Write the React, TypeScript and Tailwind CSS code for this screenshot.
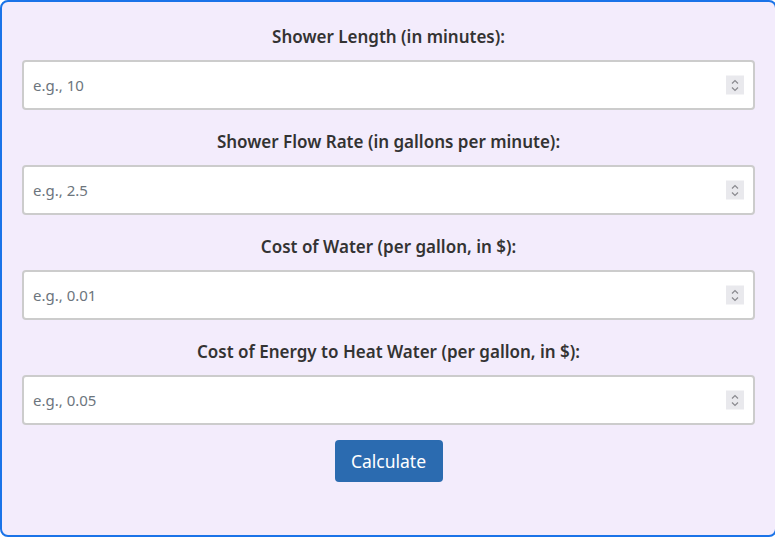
import React, { useState } from "react";

const fields = [
  { label: "Shower Length (in minutes):", placeholder: "e.g., 10" },
  { label: "Shower Flow Rate (in gallons per minute):", placeholder: "e.g., 2.5" },
  { label: "Cost of Water (per gallon, in $):", placeholder: "e.g., 0.01" },
  { label: "Cost of Energy to Heat Water (per gallon, in $):", placeholder: "e.g., 0.05" },
];

function Spinner() {
  return (
    <div className="pointer-events-none absolute right-[11px] top-1/2 flex h-[19px] w-[18px] -translate-y-1/2 items-center justify-center bg-[#e9e9ed]">
      <svg width="10" height="14" viewBox="0 0 10 14" fill="none" stroke="#8a8a8f" strokeWidth="1.2">
        <path d="M2 5 L5 2 L8 5" />
        <path d="M2 9 L5 12 L8 9" />
      </svg>
    </div>
  );
}

export default function App() {
  const [values, setValues] = useState<string[]>(["", "", "", ""]);

  return (
    <div className="h-[537px] w-[775px] overflow-hidden font-['Noto_Sans','Open_Sans',sans-serif]">
      <div className="flex h-[537px] w-[777px] flex-col rounded-lg border-2 border-[#1a73e8] bg-[#f3ecfc] px-5 pt-[23px]">
        {fields.map((f, i) => (
          <div key={i} className="mb-5 flex flex-col">
            <label className="mb-[11px] h-6 text-center text-[17px] font-semibold leading-6 text-[#333333]">
              {f.label}
            </label>
            <div className="relative">
              <input
                type="text"
                value={values[i]}
                placeholder={f.placeholder}
                onChange={(e) => {
                  const next = [...values];
                  next[i] = e.target.value;
                  setValues(next);
                }}
                className="h-[50px] w-full rounded-[4px] border-2 border-[#cccccc] bg-white px-[9px] text-[15px] text-[#333] placeholder:text-[#6c757d] focus:outline-none"
              />
              <Spinner />
            </div>
          </div>
        ))}
        <div className="-mt-[5px] flex justify-center">
          <button className="h-[42px] w-[108px] rounded-[4px] bg-[#2b6bb0] text-[17.5px] text-white">
            Calculate
          </button>
        </div>
      </div>
    </div>
  );
}
